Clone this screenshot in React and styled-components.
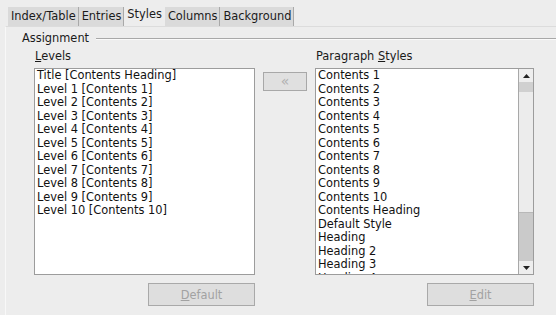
import React from 'react';
import styled, { createGlobalStyle } from 'styled-components';

const levels = [
  'Title [Contents Heading]',
  'Level 1 [Contents 1]',
  'Level 2 [Contents 2]',
  'Level 3 [Contents 3]',
  'Level 4 [Contents 4]',
  'Level 5 [Contents 5]',
  'Level 6 [Contents 6]',
  'Level 7 [Contents 7]',
  'Level 8 [Contents 8]',
  'Level 9 [Contents 9]',
  'Level 10 [Contents 10]',
];

const paragraphStyles = [
  'Contents 1',
  'Contents 2',
  'Contents 3',
  'Contents 4',
  'Contents 5',
  'Contents 6',
  'Contents 7',
  'Contents 8',
  'Contents 9',
  'Contents 10',
  'Contents Heading',
  'Default Style',
  'Heading',
  'Heading 2',
  'Heading 3',
  'Heading 4',
];

const tabs = ['Index/Table', 'Entries', 'Styles', 'Columns', 'Background'];

const App = () => {
  return (
    <>
      <GlobalStyle />
      <Window>
        <TabBar>
          {tabs.map(t => (
            <Tab key={t} active={t === 'Styles'}>{t}</Tab>
          ))}
        </TabBar>
        <Panel>
          <FrameTitle>
            <span>Assignment</span>
            <Rule />
          </FrameTitle>
          <Columns>
            <Column>
              <Label><u>L</u>evels</Label>
              <ListBox width={221}>
                <Items>
                  {levels.map(l => <Item key={l}>{l}</Item>)}
                </Items>
              </ListBox>
              <ButtonRow>
                <Button disabled><u>D</u>efault</Button>
              </ButtonRow>
            </Column>
            <Middle>
              <ArrowButton disabled>«</ArrowButton>
            </Middle>
            <Column>
              <Label>Paragraph <u>S</u>tyles</Label>
              <ListBox width={219}>
                <Items>
                  {paragraphStyles.map(s => <Item key={s}>{s}</Item>)}
                </Items>
                <ScrollBar>
                  <ScrollArrow>
                    <svg width="7" height="4" viewBox="0 0 7 4"><path d="M0 4 L3.5 0 L7 4 Z" fill="#222" /></svg>
                  </ScrollArrow>
                  <TrackTop />
                  <Track />
                  <Thumb />
                  <ScrollArrow>
                    <svg width="7" height="4" viewBox="0 0 7 4"><path d="M0 0 L3.5 4 L7 0 Z" fill="#222" /></svg>
                  </ScrollArrow>
                </ScrollBar>
              </ListBox>
              <ButtonRow>
                <Button disabled><u>E</u>dit</Button>
              </ButtonRow>
            </Column>
          </Columns>
        </Panel>
      </Window>
    </>
  );
};

const GlobalStyle = createGlobalStyle`
  body {
    margin: 0;
    background: #ededed;
    font-family: "DejaVu Sans", sans-serif;
    font-size: 11.4px;
    color: #1a1a1a;
  }
`;

const Window = styled.div`
  width: 556px;
  height: 315px;
  background: #ededed;
  overflow: hidden;
  display: flex;
  flex-direction: column;
`;

const TabBar = styled.div`
  display: flex;
  align-items: flex-end;
  padding: 5px 0 0 8px;
  height: 21px;
`;

const Tab = styled.div`
  height: ${p => (p.active ? '21px' : '19px')};
  line-height: 19px;
  padding: 0 2px 0 3px;
  background: ${p => (p.active ? '#ededed' : '#dadada')};
  border-right: 1px solid ${p => (p.active ? '#ededed' : '#a9a9a9')};
  color: #1a1a1a;
  white-space: nowrap;
`;

const Panel = styled.div`
  flex: 1;
  margin-left: 5px;
  border-left: 1px solid #f8f8f8;
  border-top: 1px solid #dcdcdc;
  padding: 3px 0 0 16px;
  display: flex;
  flex-direction: column;
`;

const FrameTitle = styled.div`
  display: flex;
  align-items: center;
  gap: 7px;
  height: 16px;
  span {
    white-space: nowrap;
  }
`;

const Rule = styled.div`
  flex: 1;
  height: 1px;
  background: #a8a8a8;
  box-shadow: 0 1px 0 #fafafa;
`;

const Columns = styled.div`
  display: flex;
  padding-left: 12px;
  margin-top: 4px;
`;

const Column = styled.div`
  display: flex;
  flex-direction: column;
`;

const Label = styled.div`
  height: 13px;
  line-height: 13px;
  padding-left: 1px;
  margin-bottom: 5px;
  u {
    text-decoration: underline;
    text-underline-offset: 1px;
  }
`;

const ListBox = styled.div`
  width: ${p => p.width}px;
  height: 207px;
  box-sizing: border-box;
  background: #ffffff;
  border: 1px solid #9c9c9c;
  display: flex;
  overflow: hidden;
`;

const Items = styled.div`
  flex: 1;
  padding: 0 0 0 2px;
  overflow: hidden;
`;

const Item = styled.div`
  height: 13.5px;
  line-height: 13.5px;
  white-space: nowrap;
  color: #111;
`;

const ScrollBar = styled.div`
  width: 14px;
  border-left: 1px solid #a8a8a8;
  background: #ececec;
  display: flex;
  flex-direction: column;
`;

const ScrollArrow = styled.div`
  height: 13px;
  display: flex;
  align-items: center;
  justify-content: center;
  background: #eeeeee;
`;

const TrackTop = styled.div`
  height: 10px;
  background: #d0d0d0;
`;

const Track = styled.div`
  flex: 1;
  background: #ececec;
`;

const Thumb = styled.div`
  height: 48px;
  background: #cacaca;
  border-top: 1px solid #b8b8b8;
`;

const Middle = styled.div`
  padding: 22px 8px 0 8px;
`;

const ArrowButton = styled.button`
  width: 44px;
  height: 19px;
  padding: 0;
  box-sizing: border-box;
  background: #e0e0e0;
  border: 1px solid #a8a8a8;
  color: #b0b0b0;
  font-family: "DejaVu Sans", sans-serif;
  font-size: 14px;
  line-height: 15px;
`;

const ButtonRow = styled.div`
  display: flex;
  justify-content: flex-end;
  margin-top: 8px;
`;

const Button = styled.button`
  width: 107px;
  height: 23px;
  box-sizing: border-box;
  background: #dedede;
  border: 1px solid #a9a9a9;
  color: #a2a2a2;
  font-family: "DejaVu Sans", sans-serif;
  font-size: 11.4px;
  padding: 0;
  u {
    text-decoration: underline;
  }
`;

export default App;
